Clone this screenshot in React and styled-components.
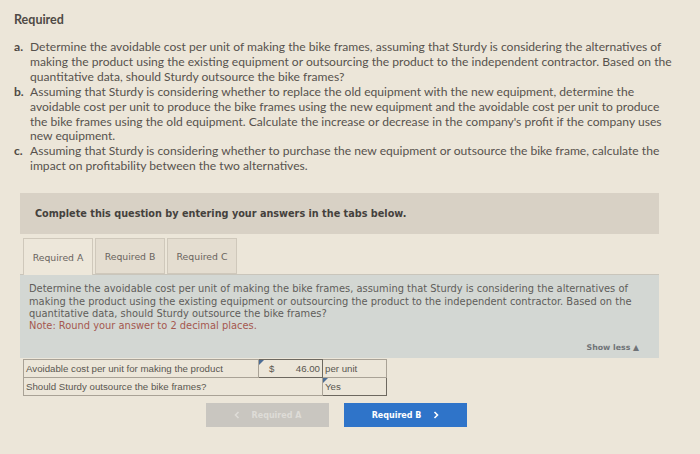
import React from "react";
import styled, { createGlobalStyle } from "styled-components";

const GlobalStyle = createGlobalStyle`
  html, body {
    margin: 0;
    padding: 0;
    background: #ece6d9;
  }
  body {
    width: 700px;
    height: 454px;
    overflow: hidden;
    font-family: Lato, "Open Sans", sans-serif;
    color: #57524d;
  }
`;

const Page = styled.div`
  padding: 12px 20px 0 14px;
`;

const Heading = styled.h2`
  margin: 0 0 12px;
  font-size: 12.5px;
  line-height: 16px;
  font-weight: 700;
  color: #4f4a45;
`;

const List = styled.ol`
  margin: 0;
  padding: 0 6px 0 0;
  list-style: none;
`;

const Item = styled.li`
  display: flex;
  font-size: 12.1px;
  line-height: 14.9px;

  b {
    width: 16px;
    flex: none;
    font-weight: 700;
    color: #4f4a45;
  }
`;

const Banner = styled.div`
  margin: 19px 21px 0 6px;
  height: 41px;
  background: #d8d1c5;
  display: flex;
  align-items: center;
  padding-left: 15px;
  font-family: "DejaVu Sans", Verdana, sans-serif;
  font-size: 9.7px;
  font-weight: 700;
  color: #45413d;
`;

const TabBar = styled.div`
  display: flex;
  gap: 2px;
  margin: 4px 0 0 9px;
`;

const Tab = styled.div`
  width: 70px;
  height: ${(p) => (p.$active ? 37 : 36)}px;
  margin-bottom: ${(p) => (p.$active ? -1 : 0)}px;
  display: flex;
  align-items: center;
  justify-content: center;
  box-sizing: border-box;
  border: 1px solid #cfc8bb;
  border-bottom: ${(p) => (p.$active ? "none" : "1px solid #cfc8bb")};
  background: ${(p) => (p.$active ? "#ede7da" : "#e4ddd0")};
  font-family: "DejaVu Sans", Verdana, sans-serif;
  font-size: 9.3px;
  color: #6a645e;
  position: relative;
  z-index: 1;
`;

const Panel = styled.div`
  margin: 0 21px 0 6px;
  height: 84px;
  box-sizing: border-box;
  background: #d3d7d3;
  border-top: 1px solid #c9c5bb;
  padding: 8px 24px 0 9px;
  font-family: "DejaVu Sans", Verdana, sans-serif;
  font-size: 9.9px;
  line-height: 12.4px;
  color: #5f5d5a;
  display: flex;
  flex-direction: column;
`;

const Note = styled.div`
  color: #a5584f;
`;

const ShowLess = styled.div`
  margin-top: auto;
  margin-bottom: 4px;
  margin-right: -4px;
  align-self: flex-end;
  font-size: 7.8px;
  font-weight: 700;
  color: #6f7377;
`;

const Table = styled.table`
  margin: 1px 0 0 9px;
  border-collapse: collapse;
  font-family: "Liberation Sans", Arial, sans-serif;
  font-size: 9.7px;
  color: #5a5650;
  border: 1px solid #a29b90;

  td {
    height: 17px;
    padding: 0 2px;
    border: 1px solid #a9a296;
  }
`;

const LabelCell = styled.td`
  width: 230px;
`;

const InputCell = styled.td`
  position: relative;
  width: 59px;
  border: 1px solid #6d685f !important;
  text-align: ${(p) => (p.$left ? "left" : "right")};

  span {
    position: absolute;
    left: 10px;
    top: 3px;
  }

  &::before {
    content: "";
    position: absolute;
    left: 0;
    top: 0;
    border-top: 5px solid #4c6d95;
    border-right: 5px solid transparent;
  }
`;

const UnitCell = styled.td`
  width: 51px;
`;

const Buttons = styled.div`
  display: flex;
  gap: 15px;
  margin: 7px 0 0 192px;
`;

const NavButton = styled.button`
  width: 123px;
  height: 24px;
  border: none;
  display: flex;
  align-items: center;
  justify-content: center;
  gap: 12px;
  font-family: "DejaVu Sans", Verdana, sans-serif;
  font-size: 8px;
  font-weight: 700;
  background: ${(p) => (p.$primary ? "#2f74c9" : "#c9c6c0")};
  color: ${(p) => (p.$primary ? "#ffffff" : "#dedcd7")};
  padding: 0;
`;

const Chevron = ({ dir }) => (
  <svg width="6" height="8" viewBox="0 0 6 8">
    <path
      d={dir === "left" ? "M4.5 1 L1.5 4 L4.5 7" : "M1.5 1 L4.5 4 L1.5 7"}
      fill="none"
      stroke="currentColor"
      strokeWidth="1.6"
    />
  </svg>
);

export default function App() {
  return (
    <>
      <GlobalStyle />
      <Page>
        <Heading>Required</Heading>
        <List>
          <Item>
            <b>a.</b>
            <span>
              Determine the avoidable cost per unit of making the bike frames, assuming that Sturdy is considering the alternatives of
              making the product using the existing equipment or outsourcing the product to the independent contractor. Based on the
              quantitative data, should Sturdy outsource the bike frames?
            </span>
          </Item>
          <Item>
            <b>b.</b>
            <span>
              Assuming that Sturdy is considering whether to replace the old equipment with the new equipment, determine the
              avoidable cost per unit to produce the bike frames using the new equipment and the avoidable cost per unit to produce
              the bike frames using the old equipment. Calculate the increase or decrease in the company's profit if the company uses
              new equipment.
            </span>
          </Item>
          <Item>
            <b>c.</b>
            <span>
              Assuming that Sturdy is considering whether to purchase the new equipment or outsource the bike frame, calculate the
              impact on profitability between the two alternatives.
            </span>
          </Item>
        </List>

        <Banner>Complete this question by entering your answers in the tabs below.</Banner>

        <TabBar>
          <Tab $active>Required A</Tab>
          <Tab>Required B</Tab>
          <Tab>Required C</Tab>
        </TabBar>

        <Panel>
          <div>
            Determine the avoidable cost per unit of making the bike frames, assuming that Sturdy is considering the alternatives of
            making the product using the existing equipment or outsourcing the product to the independent contractor. Based on the
            quantitative data, should Sturdy outsource the bike frames?
          </div>
          <Note>Note: Round your answer to 2 decimal places.</Note>
          <ShowLess>Show less ▲</ShowLess>
        </Panel>

        <Table>
          <tbody>
            <tr>
              <LabelCell>Avoidable cost per unit for making the product</LabelCell>
              <InputCell>
                <span>$</span>46.00
              </InputCell>
              <UnitCell>per unit</UnitCell>
            </tr>
            <tr>
              <td colSpan={2}>Should Sturdy outsource the bike frames?</td>
              <InputCell $left>Yes</InputCell>
            </tr>
          </tbody>
        </Table>

        <Buttons>
          <NavButton disabled>
            <Chevron dir="left" />
            Required A
          </NavButton>
          <NavButton $primary>
            Required B
            <Chevron dir="right" />
          </NavButton>
        </Buttons>
      </Page>
    </>
  );
}
